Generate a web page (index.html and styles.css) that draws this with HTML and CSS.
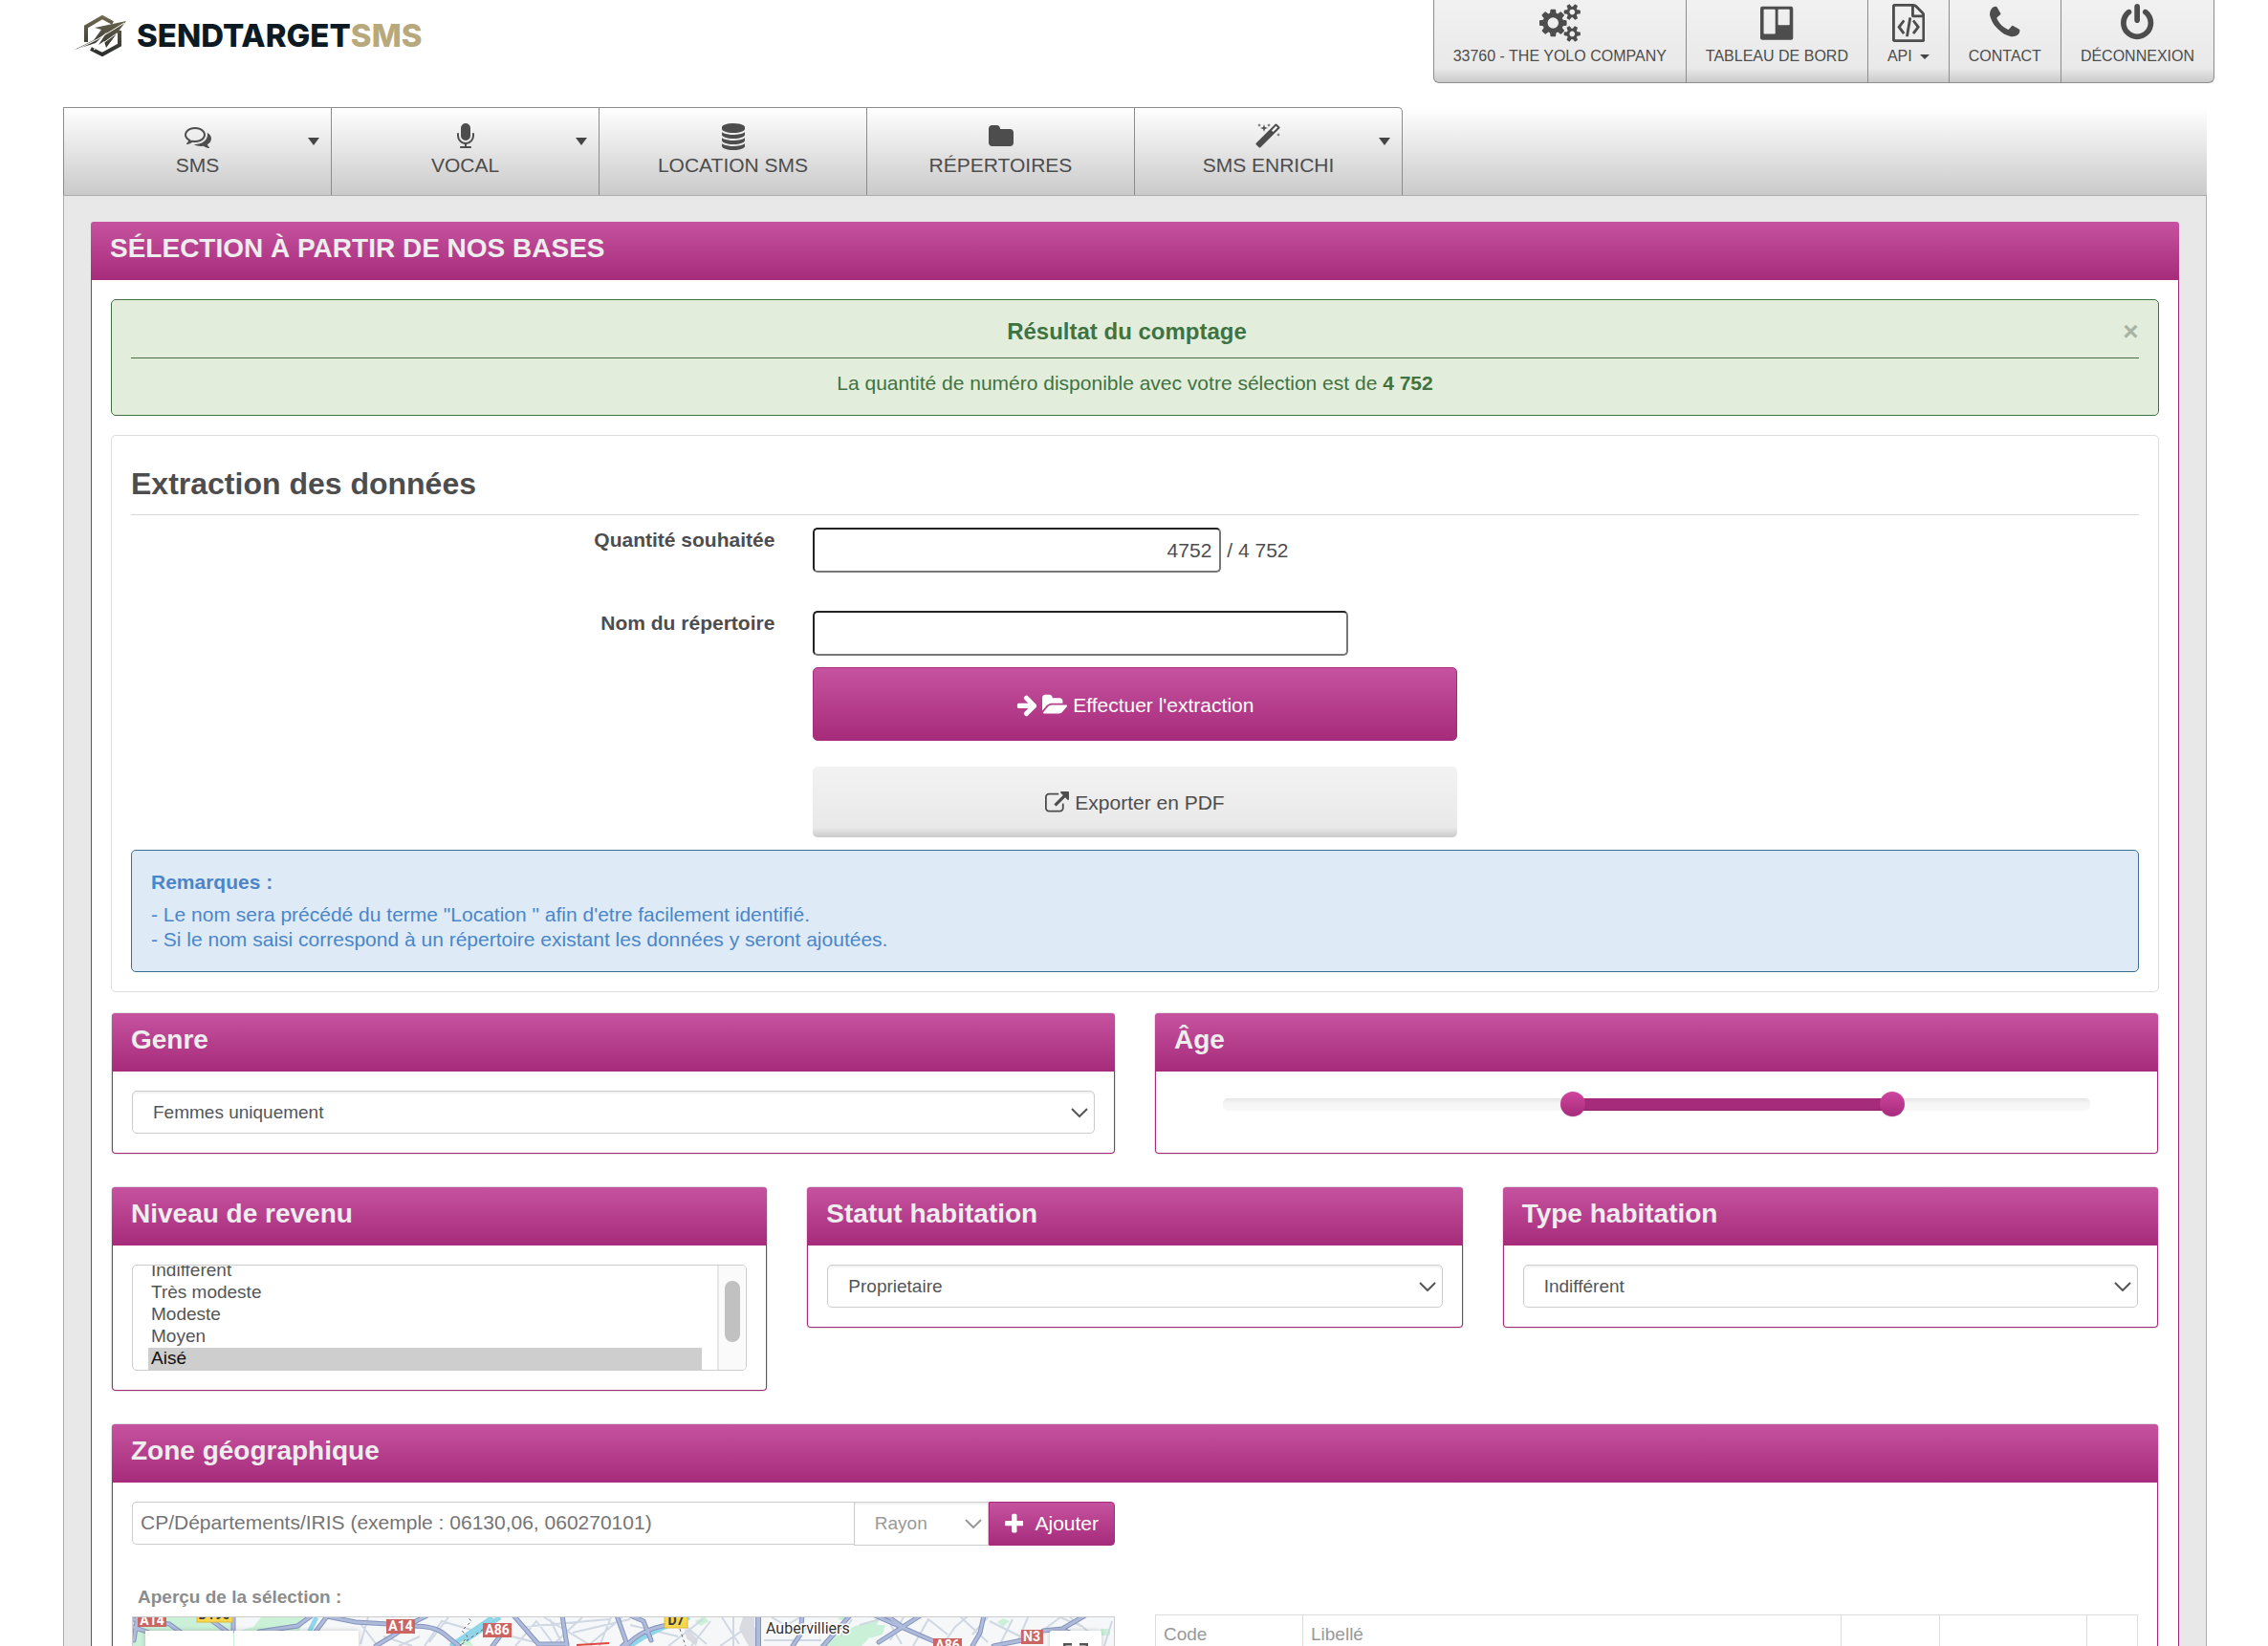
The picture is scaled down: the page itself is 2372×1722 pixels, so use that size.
FILE: index.html
```html
<!DOCTYPE html>
<html lang="fr">
<head>
<meta charset="utf-8">
<meta name="viewport" content="width=device-width, initial-scale=1">
<title>SendTargetSMS - Sélection à partir de nos bases</title>
<link rel="stylesheet" href="styles.css">
</head>
<body>
<div class="page">
  <header class="header">
    <a class="logo" href="#">
      <svg class="logo-mark" viewBox="0 0 54 45" aria-hidden="true">
        <defs>
          <linearGradient id="mark" x1="0" y1="0" x2="0" y2="45" gradientUnits="userSpaceOnUse">
            <stop offset="0" stop-color="#736c52"/>
            <stop offset="1" stop-color="#262a2b"/>
          </linearGradient>
        </defs>
        <g fill="none" stroke="url(#mark)" stroke-width="4">
          <path d="M12 29V13L29 3l11 6"/>
          <path d="M47 17v15L29 42l-12-6"/>
        </g>
        <path fill="url(#mark)" d="M54 7 21 14l7 2-8 11-20 10 22-7 12-12-9 14 6-4 2 7z"/>
        <path fill="none" stroke="#fff" stroke-width="1" d="M4 36 24 26 52 9M20 37 44 20"/>
      </svg>
      <span class="logo-text">SENDTARGET<span class="logo-accent">SMS</span></span>
    </a>
    <nav class="tools" aria-label="Compte">
      <a class="tool" href="#">
        <svg class="tool-icon" viewBox="0 0 1920 1792" aria-hidden="true"><path d="M896 896q0-106-75-181t-181-75-181 75-75 181 75 181 181 75 181-75 75-181zm768 512q0-52-38-90t-90-38-90 38-38 90q0 53 37.5 90.5t90.5 37.5 90.5-37.5 37.5-90.5zm0-1024q0-52-38-90t-90-38-90 38-38 90q0 53 37.5 90.5t90.5 37.5 90.5-37.5 37.5-90.5zm-384 421v185q0 10-7 19.5t-16 10.5l-155 24q-11 35-32 76 34 48 90 115 7 11 7 20 0 12-7 19-23 30-82.5 89.5t-78.5 59.5q-11 0-21-7l-115-90q-37 19-77 31-11 108-23 155-7 24-30 24h-186q-11 0-20-7.5t-10-17.5l-23-153q-34-10-75-31l-118 89q-7 7-20 7-11 0-21-8-144-133-144-160 0-9 7-19 10-14 41-53t47-61q-23-44-35-82l-152-24q-10-1-17-9.5t-7-19.5v-185q0-10 7-19.5t16-10.5l155-24q11-35 32-76-34-48-90-115-7-11-7-20 0-12 7-20 22-30 82-89t79-59q11 0 21 7l115 90q34-18 77-32 11-108 23-154 7-24 30-24h186q11 0 20 7.5t10 17.5l23 153q34 10 75 31l118-89q8-7 20-7 11 0 21 8 144 133 144 160 0 8-7 19-12 16-42 54t-45 60q23 48 34 82l152 23q10 2 17 10.5t7 19.5zm640 533v140q0 16-149 31-12 27-30 52 51 113 51 138 0 4-4 7-122 71-124 71-8 0-46-47t-52-68q-20 2-30 2t-30-2q-14 21-52 68t-46 47q-2 0-124-71-4-3-4-7 0-25 51-138-18-25-30-52-149-15-149-31v-140q0-16 149-31 13-29 30-52-51-113-51-138 0-4 4-7 4-2 35-20t59-34 30-16q8 0 46 46.5t52 67.5q20-2 30-2t30 2q51-71 92-112l6-2q4 0 124 70 4 3 4 7 0 25-51 138 17 23 30 52 149 15 149 31zm0-1024v140q0 16-149 31-12 27-30 52 51 113 51 138 0 4-4 7-122 71-124 71-8 0-46-47t-52-68q-20 2-30 2t-30-2q-14 21-52 68t-46 47q-2 0-124-71-4-3-4-7 0-25 51-138-18-25-30-52-149-15-149-31v-140q0-16 149-31 13-29 30-52-51-113-51-138 0-4 4-7 4-2 35-20t59-34 30-16q8 0 46 46.5t52 67.5q20-2 30-2t30 2q51-71 92-112l6-2q4 0 124 70 4 3 4 7 0 25-51 138 17 23 30 52 149 15 149 31z"/></svg>
        <span>33760 - THE YOLO COMPANY</span>
      </a>
      <a class="tool" href="#">
        <svg class="tool-icon" viewBox="0 0 1536 1792" aria-hidden="true"><path fill-rule="evenodd" d="M96 128h1344q96 0 96 96v1376q0 96-96 96H96q-96 0-96-96V224q0-96 96-96zm96 128q-32 0-32 32v1088q0 32 32 32h480q32 0 32-32V288q0-32-32-32zm672 0q-32 0-32 32v672q0 32 32 32h480q32 0 32-32V288q0-32-32-32z"/></svg>
        <span>TABLEAU DE BORD</span>
      </a>
      <a class="tool" href="#">
        <svg class="tool-icon" viewBox="128 0 1536 1792" aria-hidden="true"><path d="M1596 380q28 28 48 76t20 88v1152q0 40-28 68t-68 28h-1344q-40 0-68-28t-28-68v-1600q0-40 28-68t68-28h896q40 0 88 20t76 48zm-444-244v376h376q-10-29-22-41l-313-313q-12-12-41-22zm384 1528v-1024h-416q-40 0-68-28t-28-68v-416h-768v1536h1280zM608 768q8-11 21-12.5t24 6.5l51 38q11 8 12.5 21t-6.5 24l-182 243 182 243q8 11 6.5 24t-12.500 21l-51 38q-11 8-24 6.500t-21-12.500l-226-301q-14-19 0-38zm802 301q14 19 0 38l-226 301q-8 11-21 12.500t-24-6.500l-51-38q-11-8-12.500-21t6.500-24l182-243-182-243q-8-11-6.500-24t12.500-21l51-38q11-8 24-6.500t21 12.500zm-620 461q-13-2-20.500-13t-5.500-24l138-831q2-13 13-20.500t24-5.500l63 10q13 2 20.500 13t5.500 24l-138 831q-2 13-13 20.500t-24 5.500z"/></svg>
        <span class="tool-menu">API <span class="caret caret-small"></span></span>
      </a>
      <a class="tool" href="#">
        <svg class="tool-icon" viewBox="192 0 1408 1792" aria-hidden="true"><path d="M1600 1240q0 27-10 70.500t-21 68.500q-21 50-122 106-94 51-186 51-27 0-53-3.500t-57.500-12.500-47-14.500-55.500-20.500-49-18q-98-35-175-83-127-79-264-216t-216-264q-48-77-83-175-3-9-18-49t-20.500-55.500-14.500-47-12.500-57.500-3.500-53q0-92 51-186 56-101 106-122 25-11 68.500-21t70.500-10q14 0 21 3 18 6 53 76 11 19 30 54t35 63.500 31 53.500q3 4 17.500 25t21.500 35.500 7 28.500q0 20-28.500 50t-62 55-62 53-28.500 46q0 9 5 22.500t8.500 20.500 14 24 11.500 19q76 137 174 235t235 174q2 1 19 11.500t24 14 20.500 8.500 22.500 5q18 0 46-28.500t53-62 55-62 50-28.500q14 0 28.500 7t35.500 21.500 25 17.500q25 15 53.500 31t63.500 35 54 30q70 35 76 53 3 7 3 21z"/></svg>
        <span>CONTACT</span>
      </a>
      <a class="tool" href="#">
        <svg class="tool-icon" viewBox="128 0 1536 1792" aria-hidden="true"><path d="M1664 896q0 156-61 298t-164 245-245 164-298 61-298-61-245-164-164-245-61-298q0-182 80.500-343t226.500-270q43-32 95.500-25t83.500 50q32 42 24.500 94.500t-49.500 84.500q-98 74-151.500 181t-53.500 228q0 104 40.500 198.500t109.500 163.500 163.500 109.500 198.500 40.500 198.500-40.500 163.500-109.500 109.500-163.500 40.500-198.500q0-121-53.500-228t-151.500-181q-42-32-49.500-84.500t24.500-94.500q31-43 84-50t95 25q146 109 226.500 270t80.500 343zm-640-768v640q0 52-38 90t-90 38-90-38-38-90v-640q0-52 38-90t90-38 90 38 38 90z"/></svg>
        <span>DÉCONNEXION</span>
      </a>
    </nav>
  </header>

  <div class="shell">
    <nav class="menu" aria-label="Menu principal">
      <a class="menu-item" href="#">
        <svg class="menu-icon" viewBox="0 0 1792 1792" aria-hidden="true"><path d="M704 384q-153 0-286 52t-211.500 141-78.500 191q0 82 53 158t149 132l97 56-35 84q34-20 62-39l44-31 53 10q78 14 153 14 153 0 286-52t211.500-141 78.500-191-78.500-191-211.500-141-286-52zm0-128q191 0 353.500 68.500t256.500 186.500 94 257-94 257-256.500 186.500-353.500 68.500q-86 0-176-16-124 88-278 128-36 9-86 16h-3q-11 0-20.500-8t-11.500-21q-1-3-1-6.500t.5-6.500 2-6l2.500-5 3.500-5.500 4-5 4.500-5 4-4.500q5-6 23-25t26-29.500 22.500-29 25-38.500 20.500-44q-124-72-195-177t-71-224q0-139 94-257t256.500-186.500 353.500-68.500zm822 1169q10 24 20.500 44t25 38.500 22.500 29 26 29.500 23 25q1 1 4 4.500t4.500 5 4 5 3.500 5.500l2.500 5 2 6 .5 6.500-1 6.500q-3 14-13 22t-22 7q-50-7-86-16-154-40-278-128-90 16-176 16-271 0-472-132 58 4 88 4 161 0 309-45t264-129q125-92 192-212t67-254q0-77-23-152 129 71 204 178t75 230q0 120-71 224.500t-195 176.500z"/></svg>
        <span>SMS</span>
        <span class="caret menu-caret"></span>
      </a>
      <a class="menu-item" href="#">
        <svg class="menu-icon" viewBox="0 0 1792 1792" aria-hidden="true"><path d="M1472 704v128q0 221-147.500 384.500t-364.500 187.500v132h256q26 0 45 19t19 45-19 45-45 19h-640q-26 0-45-19t-19-45 19-45 45-19h256v-132q-217-24-364.500-187.500t-147.500-384.500v-128q0-26 19-45t45-19 45 19 19 45v128q0 185 131.500 316.500t316.500 131.500 316.500-131.500 131.500-316.500v-128q0-26 19-45t45-19 45 19 19 45zm-256-384v512q0 132-94 226t-226 94-226-94-94-226v-512q0-132 94-226t226-94 226 94 94 226z"/></svg>
        <span>VOCAL</span>
        <span class="caret menu-caret"></span>
      </a>
      <a class="menu-item" href="#">
        <svg class="menu-icon" viewBox="0 0 1792 1792" aria-hidden="true"><path d="M896 768q237 0 443-43t325-127v170q0 69-103 128t-280 93.500-385 34.500-385-34.500-280-93.500-103-128v-170q119 84 325 127t443 43zm0 768q237 0 443-43t325-127v170q0 69-103 128t-280 93.500-385 34.500-385-34.500-280-93.500-103-128v-170q119 84 325 127t443 43zm0-384q237 0 443-43t325-127v170q0 69-103 128t-280 93.500-385 34.500-385-34.500-280-93.500-103-128v-170q119 84 325 127t443 43zm0-1152q208 0 385 34.500t280 93.500 103 128v128q0 69-103 128t-280 93.500-385 34.500-385-34.500-280-93.500-103-128v-128q0-69 103-128t280-93.500 385-34.500z"/></svg>
        <span>LOCATION SMS</span>
      </a>
      <a class="menu-item" href="#">
        <svg class="menu-icon" viewBox="0 0 1792 1792" aria-hidden="true"><path d="M1728 608v704q0 92-66 158t-158 66h-1216q-92 0-158-66t-66-158v-960q0-92 66-158t158-66h320q92 0 158 66t66 158v32h672q92 0 158 66t66 158z"/></svg>
        <span>RÉPERTOIRES</span>
      </a>
      <a class="menu-item" href="#">
        <svg class="menu-icon" viewBox="0 0 1792 1792" aria-hidden="true"><path d="M1190 581l293-293-107-107-293 293zm447-293q0 27-18 45l-1286 1286q-18 18-45 18t-45-18l-198-198q-18-18-18-45t18-45l1286-1286q18-18 45-18t45 18l198 198q18 18 18 45zm-1351-190l98 30-98 30-30 98-30-98-98-30 98-30 30-98zm350 162l196 60-196 60-60 196-60-196-196-60 196-60 60-196zm930 478l98 30-98 30-30 98-30-98-98-30 98-30 30-98zm-640-640l98 30-98 30-30 98-30-98-98-30 98-30 30-98z"/></svg>
        <span>SMS ENRICHI</span>
        <span class="caret menu-caret"></span>
      </a>
    </nav>

    <main class="main">
      <section class="panel panel-main">
        <h1 class="panel-title">SÉLECTION À PARTIR DE NOS BASES</h1>
        <div class="panel-body">

          <div class="alert" role="status">
            <div class="alert-head">
              <h2 class="alert-title">Résultat du comptage</h2>
              <button class="alert-close" type="button" aria-label="Fermer">×</button>
            </div>
            <p class="alert-text">La quantité de numéro disponible avec votre sélection est de <strong>4 752</strong></p>
          </div>

          <form class="extract">
            <h2 class="extract-title">Extraction des données</h2>
            <div class="extract-grid">
              <label class="extract-label" for="quantite">Quantité souhaitée</label>
              <div class="extract-field">
                <input class="box box-qty" id="quantite" type="text" value="4752">
                <span>/ 4 752</span>
              </div>
              <label class="extract-label" for="nom">Nom du répertoire</label>
              <div class="extract-field">
                <input class="box box-name" id="nom" type="text">
              </div>
            </div>
            <div class="extract-grid extract-actions">
              <button class="btn btn-primary btn-large" type="submit">
                <svg class="btn-icon" viewBox="192 0 1536 1792" aria-hidden="true"><path d="M1728 960q0 54-37 91l-651 651q-39 37-91 37-51 0-90-37l-75-75q-38-38-38-91t38-91l293-293h-704q-52 0-84.500-37.500t-32.500-90.500v-128q0-53 32.500-90.500t84.500-37.500h704l-293-294q-38-36-38-90t38-90l75-75q38-38 90-38 53 0 91 38l651 651q37 35 37 90z"/></svg>
                <svg class="btn-icon" viewBox="0 0 1879 1792" aria-hidden="true"><path d="M1879 952q0 31-31 66l-336 396q-43 51-120.500 86.500t-143.500 35.500h-1088q-34 0-60.500-13t-26.500-43q0-31 31-66l336-396q43-51 120.500-86.500t143.500-35.500h1088q34 0 60.500 13t26.500 43zm-343-344v160h-832q-94 0-197 47.500t-164 119.500l-337 396-5 6q0-4-.5-12.500t-.5-12.500v-960q0-92 66-158t158-66h320q92 0 158 66t66 158v32h544q92 0 158 66t66 158z"/></svg>
                <span>Effectuer l'extraction</span>
              </button>
              <button class="btn btn-default btn-large" type="button">
                <svg class="btn-icon" viewBox="0 0 1792 1792" aria-hidden="true"><path d="M1408 928v320q0 119-84.500 203.500t-203.500 84.500h-832q-119 0-203.500-84.500t-84.500-203.500v-832q0-119 84.500-203.500t203.500-84.500h704q14 0 23 9t9 23v64q0 14-9 23t-23 9h-704q-66 0-113 47t-47 113v832q0 66 47 113t113 47h832q66 0 113-47t47-113v-320q0-14 9-23t23-9h64q14 0 23 9t9 23zm384-864v512q0 26-19 45t-45 19-45-19l-176-176-652 652q-10 10-23 10t-23-10l-114-114q-10-10-10-23t10-23l652-652-176-176q-19-19-19-45t19-45 45-19h512q26 0 45 19t19 45z"/></svg>
                <span>Exporter en PDF</span>
              </button>
            </div>
            <div class="note">
              <strong class="note-title">Remarques :</strong>
              <p>- Le nom sera précédé du terme "Location " afin d'etre facilement identifié.</p>
              <p>- Si le nom saisi correspond à un répertoire existant les données y seront ajoutées.</p>
            </div>
          </form>

          <div class="filters">
            <div class="row row-2">
              <section class="panel">
                <h2 class="panel-title"><label for="genre">Genre</label></h2>
                <div class="panel-body">
                  <div class="select">
                    <select id="genre"><option>Indifférent</option><option selected>Femmes uniquement</option><option>Hommes uniquement</option></select>
                    <svg class="chevron" viewBox="0 0 18 10" aria-hidden="true"><path d="M1 1l8 8 8-8"/></svg>
                  </div>
                </div>
              </section>
              <section class="panel">
                <h2 class="panel-title">Âge</h2>
                <div class="panel-body">
                  <div class="slider">
                    <div class="slider-track"><div class="slider-fill" style="margin-left:40.3%;width:36.9%"></div></div>
                    <input type="range" min="18" max="75" value="41" aria-label="Âge minimum">
                    <input type="range" min="18" max="75" value="62" aria-label="Âge maximum">
                  </div>
                </div>
              </section>
            </div>

            <div class="row row-3">
              <section class="panel">
                <h2 class="panel-title"><label for="revenu">Niveau de revenu</label></h2>
                <div class="panel-body">
                  <div class="list">
                    <select id="revenu" multiple>
                      <option>Indifférent</option>
                      <option>Très modeste</option>
                      <option>Modeste</option>
                      <option>Moyen</option>
                      <option selected>Aisé</option>
                      <option>Très aisé</option>
                      <option>Fortuné</option>
                    </select>
                    <div class="list-track" aria-hidden="true"><div class="list-thumb"></div></div>
                  </div>
                </div>
              </section>
              <section class="panel">
                <h2 class="panel-title"><label for="statut">Statut habitation</label></h2>
                <div class="panel-body">
                  <div class="select">
                    <select id="statut"><option>Indifférent</option><option selected>Proprietaire</option><option>Locataire</option></select>
                    <svg class="chevron" viewBox="0 0 18 10" aria-hidden="true"><path d="M1 1l8 8 8-8"/></svg>
                  </div>
                </div>
              </section>
              <section class="panel">
                <h2 class="panel-title"><label for="type">Type habitation</label></h2>
                <div class="panel-body">
                  <div class="select">
                    <select id="type"><option>Indifférent</option><option>Maison</option><option>Appartement</option></select>
                    <svg class="chevron" viewBox="0 0 18 10" aria-hidden="true"><path d="M1 1l8 8 8-8"/></svg>
                  </div>
                </div>
              </section>
            </div>

            <section class="panel">
              <h2 class="panel-title">Zone géographique</h2>
              <div class="panel-body row row-2">
                <div>
                  <form class="zone-form">
                    <input class="zone-input" type="text" placeholder="CP/Départements/IRIS (exemple : 06130,06, 060270101)" aria-label="Zone">
                    <div class="select zone-select">
                      <select aria-label="Rayon"><option>Rayon</option><option>5 km</option><option>10 km</option></select>
                      <svg class="chevron" viewBox="0 0 18 10" aria-hidden="true"><path d="M1 1l8 8 8-8"/></svg>
                    </div>
                    <button class="btn btn-primary zone-add" type="submit">
                      <svg class="btn-icon" viewBox="192 0 1408 1792" aria-hidden="true"><path d="M1600 736v192q0 40-28 68t-68 28h-416v416q0 40-28 68t-68 28h-192q-40 0-68-28t-28-68v-416h-416q-40 0-68-28t-28-68v-192q0-40 28-68t68-28h416v-416q0-40 28-68t68-28h192q40 0 68 28t28 68v416h416q40 0 68 28t28 68z"/></svg>
                      <span>Ajouter</span>
                    </button>
                  </form>
                  <h3 class="map-title">Aperçu de la sélection :</h3>
                  <div class="map">
                    <svg class="map-canvas" aria-label="Carte">
                      <rect width="100%" height="100%" fill="#f6f7f8"/>
                      <g fill="#caf0d8">
                        <path d="M0 0h182l-8 14-34 6-34 10H0z"/>
                        <path d="M724 23l32-14 18-4 8-5h0l-6 12-8 12-10 10h-44z"/>
                        <path d="M771 13l6-5h10l-3 10-14 4zM588 4l10-5 4 5-8 5zM737 2l6-4h10l-6 6zM904 5l6-4 7 3-7 6zM1012 12h10v7h-10zM336 28l12-10 8 12z"/>
                      </g>
                      <path d="M104 0h30l-8 10-22 6z" fill="#f6f7f8"/>
                      <g fill="#d9dbe0"><path d="M638 0h12v10l6 10v10h-12l-10-18zM577 12l6 2 8 10-2 6-10-8z"/></g>
                      <g fill="none" stroke="#cfd8e3" stroke-width="2">
                        <path d="M236 4l20 26M246 0l-8 28M262 20l30 10M300 20l-22 10M305 30l18-26 34 10M330 0l-20 26M400 30l22-26 18 24M430 0l50 30M408 10l90-8M450 30l-14-28M470 0l-30 28M460 16l60-14M478 28l34-28M500 0l-12 30M396 20l40 10"/>
                        <path d="M520 8l50 12M560 30l36-28M600 28l-28-24M604 4l-20 26M616 0l18 28M628 0v30M640 12l-26 18M660 24h60M668 0l24 14M684 8l14-8M690 26l20-20M740 20l12-18M760 8l28-8 16 28M806 0l-14 24M816 30l16-28 20 16M846 30l14-20 14-12M866 0l28 26M878 18l16-18M896 4l40 20M906 30l14-28M936 0l-10 24M946 18l24-18 24 10M980 0l26 20M1016 30l8-26"/>
                      </g>
                      <g fill="none" stroke="#8fd6ea" stroke-width="5"><path d="M192 0l-8 16M332 30l44-30M348 24l36-24M520 30q20-14 42-22l20-8"/></g>
                      <g fill="none" stroke="#8594bf" stroke-width="5" stroke-linecap="round">
                        <path d="M0 2l38 5 14 10M0 10l20 7M5-2L1 24M75-2l25 18M105-2v16M132 15l40-6 14-10M203-1l-12 16M203-1l30 6 34 2M293 9q22 0 32 8l16 13M254 30l20-12 14-10 20-10M376 30l14-18M398-2l26 30h30M449-2l5 32M506-2l10 28-6 6M520-2l14 6 8 20M516 30q16-18 44-22M690 30l8-12 2-20M722 30l28-32M776-2l50 22 14 6M780 26l44-28M788-2l20 14M878 30l8-14 4-18M900 30l30-6M952 14l20-2 24-14M970 12l10 4"/>
                      </g>
                      <g fill="none" stroke="#aebbdb" stroke-width="3" stroke-linecap="round">
                        <path d="M0 2l38 5 14 10M0 10l20 7M5-2L1 24M75-2l25 18M105-2v16M132 15l40-6 14-10M203-1l-12 16M203-1l30 6 34 2M293 9q22 0 32 8l16 13M254 30l20-12 14-10 20-10M376 30l14-18M398-2l26 30h30M449-2l5 32M506-2l10 28-6 6M520-2l14 6 8 20M516 30q16-18 44-22M690 30l8-12 2-20M722 30l28-32M776-2l50 22 14 6M780 26l44-28M788-2l20 14M878 30l8-14 4-18M900 30l30-6M952 14l20-2 24-14M970 12l10 4"/>
                      </g>
                      <path d="M654 0v40" fill="none" stroke="#8594bf" stroke-width="6"/>
                      <path d="M654 0v40" fill="none" stroke="#aebbdb" stroke-width="4"/>
                      <path d="M342 30l8-10-6-6 10-10-4-4M344 28l26-18M572 12l6 18" fill="none" stroke="#666" stroke-dasharray="3 3"/>
                      <path d="M464 29l34-2" stroke="#e2463c" stroke-width="2"/>
                      <g fill="#cc6562">
                        <rect x="5" y="-5" width="30" height="15"/><rect x="265" y="2" width="30" height="15"/><rect x="366" y="6" width="30" height="15"/><rect x="837" y="22" width="30" height="15"/><rect x="929" y="13" width="23" height="15"/>
                      </g>
                      <g fill="#f9d84f" stroke="#dfb93a">
                        <rect x="67" y="-10" width="37" height="15"/><rect x="556" y="-4" width="24" height="15"/>
                      </g>
                      <g class="map-roads" text-anchor="middle">
                        <g fill="#fff"><text x="20" y="8">A14</text><text x="280" y="14">A14</text><text x="381" y="18">A86</text><text x="852" y="34">A86</text><text x="940" y="25">N3</text></g>
                        <g fill="#3c3c3c"><text x="85" y="2">D190</text><text x="568" y="8">D7</text></g>
                      </g>
                      <text class="map-city" x="662" y="17">Aubervilliers</text>
                    </svg>
                    <div class="map-types"><span></span><span></span></div>
                    <div class="map-full">
                      <svg viewBox="0 0 26 26" aria-hidden="true"><path d="M1 9V1h8M17 1h8v8M25 17v8h-8M9 25H1v-8"/></svg>
                    </div>
                  </div>
                </div>
                <table class="zones">
                  <thead>
                    <tr><th class="col-code">Code</th><th>Libellé</th><th class="col-a"></th><th class="col-b"></th><th class="col-c"></th></tr>
                  </thead>
                </table>
              </div>
            </section>
          </div>
        </div>
      </section>
    </main>
  </div>
</div>
</body>
</html>
```
FILE: styles.css
```css
* { box-sizing: border-box; }

body {
  margin: 0;
  background: #fff;
  color: #4d4d4d;
  font: 21px/26px "Liberation Sans", Arial, sans-serif;
}

h1, h2, h3, p { margin: 0; }
a { color: inherit; text-decoration: none; }
svg { display: block; fill: currentColor; }
input, select, button { font: inherit; color: inherit; margin: 0; }
button { cursor: pointer; }

.page {
  height: 100vh;
  overflow-y: auto;
  scrollbar-width: none;
}

/* Header */
.header {
  display: flex;
  justify-content: space-between;
  align-items: flex-start;
  padding: 0 56px 25px 78px;
}
.logo { display: flex; align-items: center; gap: 11px; padding-top: 15px; }
.logo-mark { width: 54px; height: 45px; }
.logo-text { font: 800 33px/45px Inter, sans-serif; color: #0d1a24; }
.logo-accent { color: #b8a97c; }

.tools {
  display: flex;
  border: 1px solid #8c8c8c;
  border-top: 0;
  border-radius: 0 0 6px 6px;
  background: linear-gradient(#f1f1f1, #e9e9e9 83%, #cacaca);
}
.tool {
  display: flex;
  flex-direction: column;
  align-items: center;
  gap: 5px;
  padding: 4px 20px 17px;
  font-size: 16px;
  line-height: 20px;
}
.tool + .tool { border-left: 1px solid #8c8c8c; }
.tool-icon { height: 40px; }
.tool-menu { display: flex; align-items: center; gap: 8px; }

.caret {
  border: 6px solid transparent;
  border-top: 8px solid #444;
  border-bottom: 0;
}
.caret-small { border-width: 5px; border-top-width: 5px; border-bottom: 0; }

/* Main menu */
.shell { margin: 0 64px 0 66px; }
.menu {
  display: flex;
  border-bottom: 1px solid #acacac;
  background: linear-gradient(#fff, #cacaca);
}
.menu-item {
  position: relative;
  display: flex;
  flex-direction: column;
  align-items: center;
  gap: 2px;
  width: 280px;
  padding: 16px 0 17px;
  border-top: 1px solid #8c8c8c;
  border-left: 1px solid #8c8c8c;
  line-height: 28px;
}
.menu-item:last-child {
  width: 281px;
  border-right: 1px solid #8c8c8c;
  border-top-right-radius: 5px;
}
.menu-icon { width: 28px; height: 28px; }
.menu-caret { position: absolute; top: 31px; right: 12px; }

.main {
  padding: 27px 28px 28px;
  border: solid #acacac;
  border-width: 0 1px;
  background: #e8e8e8;
}

/* Panels */
.panel {
  border-radius: 4px;
  background: #fff;
  box-shadow: 0 0 1px 1px rgba(0, 0, 0, .12);
}
.panel-main { box-shadow: none; }
.panel-title {
  padding: 10px 20px 15px;
  border-radius: 3px 3px 0 0;
  background: linear-gradient(#c6539f, #a62b7b);
  color: #eee;
  font-size: 28px;
  line-height: 36px;
}
.panel-body {
  padding: 20px;
  border: 1px solid #a62b7b;
  border-top: 0;
  border-radius: 0 0 4px 4px;
}

/* Count result */
.alert {
  padding: 20px;
  border: 1px solid #447044;
  border-radius: 5px;
  background: #e2eedb;
  color: #3f7341;
  text-align: center;
}
.alert-head {
  display: flex;
  padding-bottom: 14px;
  border-bottom: 1px solid #447044;
}
.alert-title { flex: 1; font-size: 24px; line-height: 26px; }
.alert-close {
  width: 17px;
  padding: 0;
  border: 0;
  background: none;
  color: #a8b3a3;
  font-size: 28px;
  font-weight: bold;
  line-height: 26px;
}
.alert-text { padding-top: 13px; }

/* Extraction */
.extract {
  margin-top: 20px;
  padding: 32px 20px 20px;
  border: 1px solid #ddd;
  border-radius: 5px;
}
.extract-title {
  margin-bottom: 13px;
  padding-bottom: 14px;
  border-bottom: 1px solid #d8d8d8;
  font-size: 32px;
  line-height: 36px;
}
.extract-grid {
  display: grid;
  grid-template-columns: repeat(3, 1fr);
  gap: 40px;
}
.extract-label { grid-column: 1; font-weight: bold; text-align: right; }
.extract-field { grid-column: 2; display: flex; align-items: center; gap: 6px; }
.box {
  height: 47px;
  padding: 0 8px;
  border: 2px solid;
  border-color: #222 #767676 #767676 #222;
  border-radius: 5px;
  background: #fff;
}
.box-qty { width: 427px; text-align: right; }
.box-name { width: 560px; }

.extract-actions { margin: 12px 0 13px; row-gap: 27px; }
.extract-actions .btn { grid-column: 2; }

.btn {
  display: flex;
  justify-content: center;
  align-items: center;
  gap: 6px;
  padding: 0 20px;
  border-radius: 5px;
}
.btn-icon { height: 25px; }
.btn-primary {
  border: 1px solid #a62b7b;
  background: linear-gradient(#c6539f, #a62b7b);
  color: #fff;
}
.btn-default {
  border: 0;
  background: linear-gradient(#f2f2f2, #e9e9e9 86%, #cacaca);
}
.btn-large { height: 77px; padding-top: 2px; }
.btn-default.btn-large { height: 74px; }

.note {
  padding: 20px;
  border: 1px solid #3a6f8f;
  border-radius: 5px;
  background: #deebf6;
  color: #4a86c9;
}
.note-title { display: block; margin-bottom: 8px; }

/* Filters */
.filters { display: grid; gap: 35px; margin-top: 22px; padding: 0 1px; }
.row { display: grid; column-gap: 42px; align-items: start; }
.row-2 { grid-template-columns: repeat(2, minmax(0, 1fr)); }
.row-3 { grid-template-columns: repeat(3, minmax(0, 1fr)); }

.select { display: grid; align-items: center; }
.select select {
  grid-area: 1 / 1;
  appearance: none;
  height: 45px;
  padding: 0 40px 0 21px;
  border: 1px solid #ccc;
  border-radius: 5px;
  background: #fff;
  box-shadow: inset 0 2px 2px rgba(0, 0, 0, .06);
  color: #555;
  font-size: 19px;
}
.chevron {
  grid-area: 1 / 1;
  justify-self: end;
  width: 18px;
  height: 10px;
  margin-right: 7px;
  fill: none;
  stroke: #555;
  stroke-width: 2;
  pointer-events: none;
}

.list {
  display: flex;
  height: 111px;
  border: 1px solid #ccc;
  border-radius: 5px;
  background: #fff;
  overflow: hidden;
}
.list select {
  flex: 1;
  height: 109px;
  padding: 8px 16px;
  border: 0;
  background: none;
  color: #555;
  font-size: 19px;
  overflow-y: scroll;
  scrollbar-width: none;
}
.list option { height: 23px; min-height: 0; padding: 0 3px; line-height: 23px; }
.list option:checked { background: #cecece linear-gradient(#cecece, #cecece); }
.list-track {
  width: 30px;
  padding: 16px 6px 0;
  border-left: 2px solid #e6e6e6;
  background: #fafafa;
}
.list-thumb { width: 16px; height: 64px; border-radius: 8px; background: #c1c1c1; }

/* Age range: both inputs lie over the shared track */
.slider { position: relative; height: 45px; margin: 0 50px; padding-top: 8px; }
.slider-track {
  height: 13px;
  border-radius: 5px;
  background: linear-gradient(#e6e6e6, #f5f5f5 40%, #f8f8f8);
}
.slider-fill { height: 13px; background: #a62b7b; box-shadow: inset 0 -1px 0 #8a2266; }
.slider input {
  position: absolute;
  top: 1px;
  left: -13px;
  width: calc(100% + 26px);
  height: 26px;
  appearance: none;
  background: none;
  pointer-events: none;
}
.slider input::-webkit-slider-thumb {
  appearance: none;
  width: 26px;
  height: 26px;
  border-radius: 50%;
  background: linear-gradient(#cf469f, #a62b7b);
  box-shadow: 0 1px 2px rgba(0, 0, 0, .1);
  pointer-events: auto;
}

/* Geographic zone */
.zone-form { display: flex; align-items: flex-start; }
.zone-input {
  flex: 1;
  height: 45px;
  padding: 0 8px 2px;
  border: 1px solid #ccc;
  border-right: 0;
  border-radius: 5px 0 0 5px;
}
.zone-input::placeholder { color: #757575; }
.zone-select { width: 141px; }
.zone-select select { height: 46px; padding-right: 30px; border-radius: 0; color: #999; }
.zone-select .chevron { stroke: #999; }
.zone-add { height: 46px; padding: 0 16px; gap: 12px; border-radius: 0 4px 4px 0; }
.map-title {
  padding: 42px 6px 8px;
  color: #8c8c8c;
  font-size: 19px;
  line-height: 24px;
}
.map {
  position: relative;
  height: 600px;
  border: 1px solid #ccc;
  overflow: hidden;
}
.map-canvas { width: 100%; height: 100%; }
.map-roads { font: bold 14px Roboto, sans-serif; }
.map-city {
  font: 16px Roboto, sans-serif;
  fill: #333;
  stroke: #fff;
  stroke-width: 3px;
  paint-order: stroke;
}
.map-types {
  position: absolute;
  top: 14px;
  left: 13px;
  display: flex;
  gap: 1px;
  height: 54px;
  box-shadow: 0 0 5px rgba(0, 0, 0, .2);
}
.map-types span { width: 92px; background: #fff; }
.map-types span + span { width: 130px; }
.map-full {
  position: absolute;
  top: 14px;
  right: 13px;
  width: 54px;
  padding: 13px 14px;
  border-radius: 2px;
  background: #fff;
  box-shadow: 0 0 5px rgba(0, 0, 0, .2);
}
.map-full path { fill: none; stroke: #555; stroke-width: 3; }

.zones {
  width: 100%;
  margin-top: 118px;
  border-collapse: collapse;
  table-layout: fixed;
  color: #999;
  font-size: 19px;
}
.zones th {
  height: 41px;
  padding: 6px 8px;
  border: 1px solid #ddd;
  font-weight: normal;
  text-align: left;
}
.col-code { width: 154px; }
.col-a { width: 103px; }
.col-b { width: 154px; }
.col-c { width: 53px; }
```
